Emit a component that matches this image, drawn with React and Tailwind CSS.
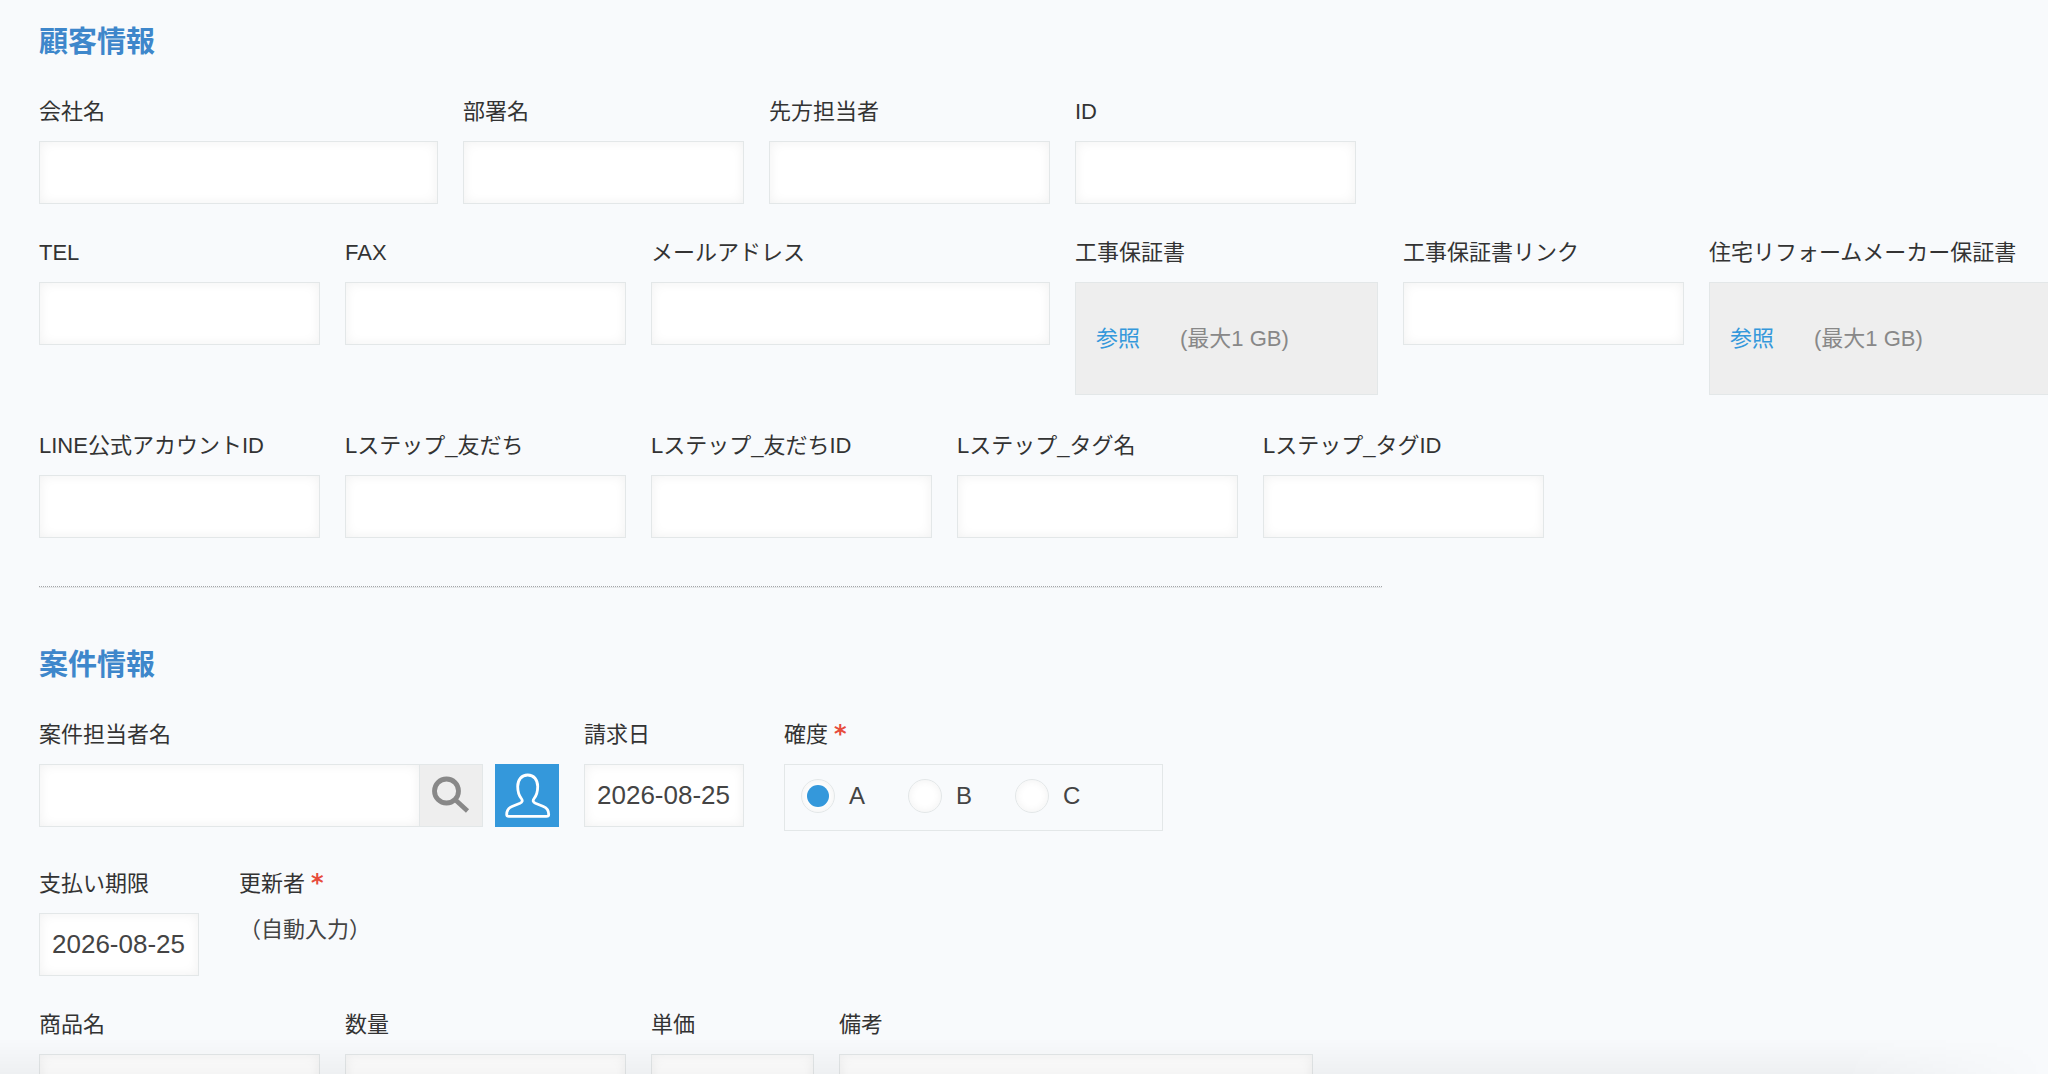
import { useState } from "react";

const inputBase =
    "h-[63px] w-full rounded-none border border-[#e3e7e8] bg-white px-3 text-[26px] text-[#444] shadow-[inset_0_0_12px_rgba(0,0,0,0.06)] outline-none focus:border-[#3498db]";

const Required = () => (
    <span className="ml-1.5 font-['DejaVu_Sans',sans-serif] text-2xl font-bold leading-none text-[#e74c3c]">*</span>
);

const Field = ({ id, label, width, children }) => (
    <div className={`shrink-0 ${width}`}>
        <label htmlFor={id} className="mb-2.5 block h-[38px] whitespace-nowrap text-[22px] leading-[38px]">
            {label}
        </label>
        {children}
    </div>
);

const TextField = ({ id, label, width = "w-[281px]", initial = "" }) => {
    const [value, setValue] = useState(initial);

    return (
        <Field id={id} label={label} width={width}>
            <input
                id={id}
                type="text"
                value={value}
                onChange={(e) => setValue(e.target.value)}
                className={inputBase}
            />
        </Field>
    );
};

const FileField = ({ id, label, width = "w-[303px]" }) => (
    <Field id={id} label={label} width={width}>
        <div className="mb-0.5 flex h-[113px] items-center border border-[#e3e7e8] bg-[#eee] px-5 text-[22px]">
            <input id={id} type="file" className="sr-only" />
            <label htmlFor={id} className="cursor-pointer text-[#3498db]">参照</label>
            <span className="ml-10 text-[#888]">(最大1 GB)</span>
        </div>
    </Field>
);

const Row = ({ children }) => <div className="mb-[30px] flex items-start gap-[25px]">{children}</div>;

const Title = ({ children }) => (
    <h2 className="mb-[30px] text-[29px] font-bold leading-[42px] text-[#3e87cb]">{children}</h2>
);

const SearchIcon = () => (
    <svg viewBox="0 0 63 63" className="size-[63px] shrink-0" fill="none" stroke="#888" aria-hidden="true">
        <circle cx="26.500" cy="27" r="12" strokeWidth="4.8" />
        <path d="M35 35.500 47.500 47" strokeWidth="4.6" />
    </svg>
);

const UserIcon = () => (
    <svg viewBox="0 0 63 63" className="size-[63px]" fill="none" stroke="#fff" strokeWidth="2.8" strokeLinejoin="round" aria-hidden="true">
        <path d="M31.700 11c-6.200 0-10 4.800-10 11.500 0 5 1.400 9.200 3.600 12 1.700 2.200.9 3.800-1.300 4.800l-8 3.200c-3.600 1.500-5.300 4.100-5.300 7.900 0 1.300.7 1.900 2.300 1.900h37.400c1.600 0 2.300-.6 2.300-1.900 0-3.800-1.700-6.400-5.300-7.900l-8-3.200c-2.200-1-3-2.600-1.300-4.800 2.200-2.800 3.600-7 3.600-12 0-6.700-3.800-11.500-10-11.500Z" />
    </svg>
);

const UserField = () => {
    const [nombre, setNombre] = useState("");

    return (
        <Field id="tanto" label="案件担当者名" width="w-[520px]">
            <div className="flex gap-3">
                <div className="flex flex-1">
                    <input
                        id="tanto"
                        type="text"
                        value={nombre}
                        onChange={(e) => setNombre(e.target.value)}
                        className={`${inputBase} min-w-0 flex-1 border-r-0`}
                    />
                    <button
                        type="button"
                        aria-label="検索"
                        className="flex h-[63px] w-16 items-center justify-center border border-[#e3e7e8] bg-[#eee]"
                    >
                        <SearchIcon />
                    </button>
                </div>
                <button
                    type="button"
                    aria-label="ユーザーを選択"
                    className="flex h-[63px] w-16 items-center justify-center bg-[#3498db]"
                >
                    <UserIcon />
                </button>
            </div>
        </Field>
    );
};

const RadioGroup = () => {
    const [kakudo, setKakudo] = useState("A");

    return (
        <fieldset className="ml-[15px] w-[379px] shrink-0">
            <legend className="mb-2.5 h-[38px] text-[22px] leading-[38px]">
                確度
                <Required />
            </legend>
            <div className="mb-1 flex h-[67px] items-center border border-[#e3e7e8] px-4 pb-1">
                {["A", "B", "C"].map((op) => (
                    <label key={op} className="flex w-[107px] items-center gap-[14px] text-2xl text-[#444]">
                        <input
                            type="radio"
                            name="kakudo"
                            value={op}
                            checked={kakudo === op}
                            onChange={() => setKakudo(op)}
                            className="grid size-[34px] appearance-none place-items-center rounded-full border border-[#e3e7e8] bg-white shadow-[inset_0_0_8px_rgba(0,0,0,0.06)] before:size-[22px] before:rounded-full checked:before:bg-[#3498db]"
                        />
                        {op}
                    </label>
                ))}
            </div>
        </fieldset>
    );
};

const App = () => {
    return (
        <main
            lang="ja"
            className="relative h-screen overflow-hidden bg-[#f8fafc] px-[39px] pt-[21px] font-['Liberation_Sans','Noto_Sans_CJK_JP',sans-serif] text-[#333]"
        >
            <form onSubmit={(e) => e.preventDefault()}>
                <Title>顧客情報</Title>
                <Row>
                    <TextField id="kaisha" label="会社名" width="w-[399px]" />
                    <TextField id="busho" label="部署名" />
                    <TextField id="senpo" label="先方担当者" />
                    <TextField id="kokyaku_id" label="ID" />
                </Row>
                <Row>
                    <TextField id="tel" label="TEL" />
                    <TextField id="fax" label="FAX" />
                    <TextField id="mail" label="メールアドレス" width="w-[399px]" />
                    <FileField id="hosho" label="工事保証書" />
                    <TextField id="hosho_link" label="工事保証書リンク" />
                    <FileField id="maker_hosho" label="住宅リフォームメーカー保証書" width="w-[360px]" />
                </Row>
                <Row>
                    <TextField id="line_id" label="LINE公式アカウントID" />
                    <TextField id="tomodachi" label="Lステップ_友だち" />
                    <TextField id="tomodachi_id" label="Lステップ_友だちID" />
                    <TextField id="tag" label="Lステップ_タグ名" />
                    <TextField id="tag_id" label="Lステップ_タグID" />
                </Row>

                <hr className="mb-14 mt-12 w-[1343px] border-b border-t border-b-[#e4e6e8] border-t-[#a4a6a8] [border-top-style:dotted]" />

                <Title>案件情報</Title>
                <Row>
                    <UserField />
                    <TextField id="seikyu" label="請求日" width="w-40" initial="2026-08-25" />
                    <RadioGroup />
                </Row>
                <Row>
                    <TextField id="shiharai" label="支払い期限" width="w-40" initial="2026-08-25" />
                    <div className="ml-[15px] text-[22px]">
                        <p className="h-[38px] leading-[38px]">
                            更新者
                            <Required />
                        </p>
                        <p className="mt-2 leading-[38px] text-[#444]">（自動入力）</p>
                    </div>
                </Row>
                <Row>
                    <TextField id="shohin" label="商品名" />
                    <TextField id="suryo" label="数量" />
                    <TextField id="tanka" label="単価" width="w-[163px]" />
                    <TextField id="biko" label="備考" width="w-[474px]" />
                </Row>
            </form>

            {/* sombra de la barra inferior */}
            <div className="pointer-events-none absolute inset-x-0 bottom-0 h-9 bg-linear-to-t from-black/4 to-transparent mask-r-from-90%" />
        </main>
    );
};

export default App;
